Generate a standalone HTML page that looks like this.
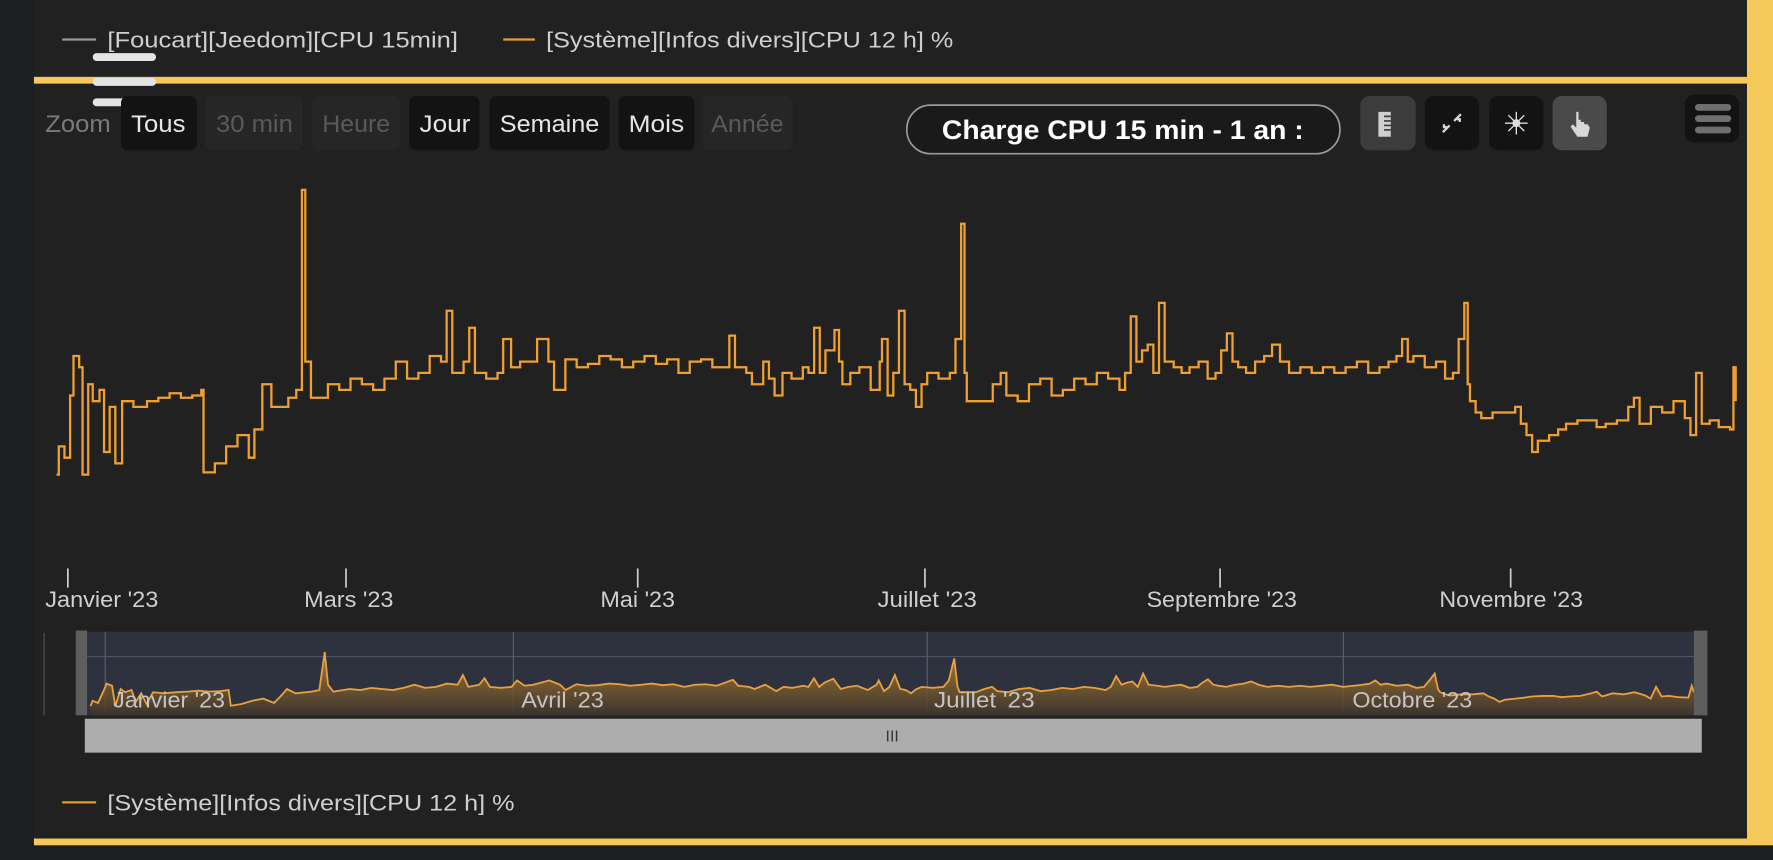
<!DOCTYPE html>
<html><head><meta charset="utf-8"><style>
html,body{margin:0;padding:0;background:#1c1e21;width:1773px;height:860px;overflow:hidden}
svg{display:block}
text{font-family:"Liberation Sans",sans-serif}
</style></head><body>
<svg width="1773" height="860" viewBox="0 0 1568 761" preserveAspectRatio="none" xmlns="http://www.w3.org/2000/svg">
<defs>
<linearGradient id="g" x1="0" y1="0" x2="0" y2="1">
<stop offset="0" stop-color="#c88a30" stop-opacity="0.75"/>
<stop offset="1" stop-color="#3a342c" stop-opacity="0.9"/>
</linearGradient>
</defs>
<rect x="0" y="0" width="1568" height="761" fill="#1c1e21"/>
<rect x="30" y="0" width="1515" height="748" fill="#212121"/>
<rect x="1545" y="0" width="23" height="748" fill="#f5c85a"/>
<rect x="30" y="68" width="1515" height="6" fill="#f5c85a"/>
<rect x="30" y="742" width="1515" height="6" fill="#f5c85a"/>

<!-- top legend -->
<line x1="55" y1="35" x2="85" y2="35" stroke="#9a9a9a" stroke-width="2"/>
<text x="95" y="42" font-size="20" fill="#cfcfcf" textLength="310" lengthAdjust="spacingAndGlyphs">[Foucart][Jeedom][CPU 15min]</text>
<line x1="445" y1="35" x2="473" y2="35" stroke="#e89a30" stroke-width="2"/>
<text x="483" y="42" font-size="20" fill="#cfcfcf" textLength="360" lengthAdjust="spacingAndGlyphs">[Système][Infos divers][CPU 12 h] %</text>

<!-- hamburger -->
<rect x="82" y="47" width="56" height="7" rx="3.5" fill="#e4e4e4"/>
<rect x="82" y="69" width="56" height="7" rx="3.5" fill="#e4e4e4"/>
<rect x="82" y="87" width="56" height="7" rx="3.5" fill="#e4e4e4"/>

<!-- zoom buttons -->
<text x="40" y="117" font-size="21" fill="#7a7a7a" textLength="58" lengthAdjust="spacingAndGlyphs">Zoom</text>
<rect x="107" y="85" width="67" height="48" rx="6" fill="#131313"/>
<text x="116" y="117" font-size="21" fill="#e6e6e6" textLength="48" lengthAdjust="spacingAndGlyphs">Tous</text>
<rect x="182" y="85" width="86" height="48" rx="6" fill="#262626"/>
<text x="191" y="117" font-size="21" fill="#5a5a5a" textLength="68" lengthAdjust="spacingAndGlyphs">30 min</text>
<rect x="276" y="85" width="78" height="48" rx="6" fill="#262626"/>
<text x="285" y="117" font-size="21" fill="#5a5a5a" textLength="60" lengthAdjust="spacingAndGlyphs">Heure</text>
<rect x="362" y="85" width="62" height="48" rx="6" fill="#131313"/>
<text x="371" y="117" font-size="21" fill="#e6e6e6" textLength="45" lengthAdjust="spacingAndGlyphs">Jour</text>
<rect x="433" y="85" width="106" height="48" rx="6" fill="#131313"/>
<text x="442" y="117" font-size="21" fill="#e6e6e6" textLength="88" lengthAdjust="spacingAndGlyphs">Semaine</text>
<rect x="547" y="85" width="67" height="48" rx="6" fill="#131313"/>
<text x="556" y="117" font-size="21" fill="#e6e6e6" textLength="49" lengthAdjust="spacingAndGlyphs">Mois</text>
<rect x="621" y="85" width="80" height="48" rx="6" fill="#262626"/>
<text x="629" y="117" font-size="21" fill="#5a5a5a" textLength="64" lengthAdjust="spacingAndGlyphs">Année</text>

<!-- title pill -->
<rect x="802" y="93" width="383" height="43" rx="21" fill="#1a1a1a" stroke="#9a9a9a" stroke-width="1.5"/>
<text x="833" y="123" font-size="24" font-weight="bold" fill="#ffffff" textLength="320" lengthAdjust="spacingAndGlyphs">Charge CPU 15 min - 1 an :</text>

<!-- icon buttons -->
<rect x="1203" y="85" width="49" height="48" rx="8" fill="#3c3c3c"/>
<rect x="1219" y="99" width="11" height="22" fill="#cfcfcf"/>
<path d="M1224 103h6M1224 107h6M1224 111h6M1224 115h6" stroke="#3c3c3c" stroke-width="1.5"/>
<rect x="1260" y="85" width="48" height="48" rx="8" fill="#131313"/>
<path d="M1276 117l6-6M1277 110v2.5h2.5M1292 101l-6 6M1291 108v-2.5h-2.5" stroke="#d8d8d8" stroke-width="2" fill="none"/>
<rect x="1317" y="85" width="48" height="48" rx="8" fill="#131313"/>
<circle cx="1341" cy="109" r="3.5" fill="#dcdcdc"/>
<g stroke="#dcdcdc" stroke-width="1.2"><path d="M1341 99v20M1331 109h20M1334 102l14 14M1348 102l-14 14"/></g>
<rect x="1373" y="85" width="48" height="48" rx="8" fill="#4a4a4a"/>
<path d="M1394 99v14l-3-3-2 2 6 9h9l2-8-2-3h-3v-2h-3v-2h-2v-7z" fill="#d8d8d8"/>
<rect x="1490" y="84" width="48" height="42" rx="8" fill="#131313"/>
<rect x="1499" y="92" width="32" height="6" rx="3" fill="#6f6f6f"/>
<rect x="1499" y="102" width="32" height="6" rx="3" fill="#6f6f6f"/>
<rect x="1499" y="112" width="32" height="6" rx="3" fill="#6f6f6f"/>

<!-- main chart -->
<path id="main" fill="none" stroke="#f0a030" stroke-width="2"/>

<!-- x axis ticks -->
<g stroke="#cfcfcf" stroke-width="1.5">
<line x1="60" y1="503" x2="60" y2="520"/><line x1="306" y1="503" x2="306" y2="520"/>
<line x1="564" y1="503" x2="564" y2="520"/><line x1="818" y1="503" x2="818" y2="520"/>
<line x1="1079" y1="503" x2="1079" y2="520"/><line x1="1336" y1="503" x2="1336" y2="520"/>
</g>
<g font-size="20" fill="#cfcfcf">
<text x="40" y="537" textLength="100" lengthAdjust="spacingAndGlyphs">Janvier '23</text>
<text x="269" y="537" textLength="79" lengthAdjust="spacingAndGlyphs">Mars '23</text>
<text x="531" y="537" textLength="66" lengthAdjust="spacingAndGlyphs">Mai '23</text>
<text x="776" y="537" textLength="88" lengthAdjust="spacingAndGlyphs">Juillet '23</text>
<text x="1014" y="537" textLength="133" lengthAdjust="spacingAndGlyphs">Septembre '23</text>
<text x="1273" y="537" textLength="127" lengthAdjust="spacingAndGlyphs">Novembre '23</text>
</g>

<!-- navigator -->
<line x1="39" y1="560" x2="39" y2="633" stroke="#555" stroke-width="1"/>
<rect x="76" y="559" width="1428" height="74" fill="#2e323e"/>
<line x1="76" y1="581" x2="1500" y2="581" stroke="#4d5362" stroke-width="1"/>
<g stroke="#5a6070" stroke-width="1"><line x1="93" y1="559" x2="93" y2="633"/><line x1="454" y1="559" x2="454" y2="633"/><line x1="820" y1="559" x2="820" y2="633"/><line x1="1188" y1="559" x2="1188" y2="633"/></g>
<path id="navfill" fill="url(#g)"/>
<path id="navline" fill="none" stroke="#e8a040" stroke-width="1.6"/>
<g font-size="20" fill="#c4c4c4">
<text x="100" y="626" textLength="99" lengthAdjust="spacingAndGlyphs">Janvier '23</text>
<text x="461" y="626" textLength="73" lengthAdjust="spacingAndGlyphs">Avril '23</text>
<text x="826" y="626" textLength="89" lengthAdjust="spacingAndGlyphs">Juillet '23</text>
<text x="1196" y="626" textLength="106" lengthAdjust="spacingAndGlyphs">Octobre '23</text></g>
<rect x="67" y="558" width="10" height="75" fill="#5e5e5e"/>
<rect x="1498" y="558" width="12" height="75" fill="#5e5e5e"/>
<rect x="75" y="636" width="1430" height="30" fill="#adadad"/>
<text x="789" y="656" font-size="14" fill="#333" text-anchor="middle">III</text>

<!-- bottom legend -->
<line x1="55" y1="710" x2="85" y2="710" stroke="#e89a30" stroke-width="2"/>
<text x="95" y="717" font-size="20" fill="#cfcfcf" textLength="360" lengthAdjust="spacingAndGlyphs">[Système][Infos divers][CPU 12 h] %</text>
</svg>
<script>
var p=[[50,420],[52,395],[57,405],[62,350],[65,315],[70,325],[73,420],[78,340],[82,355],[88,345],[92,400],[97,360],[102,410],[108,355],[118,360],[130,355],[140,352],[150,348],[160,352],[170,350],[178,345],[180,418],[190,410],[200,395],[210,385],[220,405],[225,380],[232,340],[240,360],[255,352],[262,345],[267,168],[270,320],[275,352],[290,340],[300,345],[310,335],[320,340],[330,345],[340,335],[350,320],[360,335],[370,330],[380,315],[390,320],[395,275],[400,330],[410,320],[415,290],[420,330],[430,335],[440,330],[445,300],[452,325],[460,320],[475,300],[485,320],[490,345],[500,318],[510,325],[520,322],[530,315],[540,318],[550,325],[560,320],[570,315],[580,322],[590,318],[600,330],[610,320],[620,318],[630,325],[645,297],[650,325],[660,330],[665,340],[675,320],[680,335],[685,350],[692,330],[700,335],[710,325],[715,330],[720,290],[725,330],[730,310],[738,292],[742,320],[745,340],[752,330],[760,325],[770,345],[778,320],[780,300],[785,350],[790,330],[795,275],[800,340],[805,345],[810,360],[815,340],[820,330],[830,335],[840,330],[845,300],[850,198],[853,330],[855,355],[870,355],[878,340],[885,330],[890,350],[900,355],[910,340],[920,335],[930,350],[940,345],[950,335],[960,340],[970,330],[980,335],[990,345],[995,330],[1000,280],[1005,320],[1010,310],[1015,305],[1020,330],[1025,268],[1030,320],[1038,325],[1045,330],[1052,325],[1060,320],[1068,335],[1075,330],[1080,310],[1085,295],[1090,320],[1095,325],[1102,330],[1110,320],[1118,315],[1125,305],[1132,320],[1140,330],[1150,325],[1160,330],[1170,325],[1180,330],[1190,325],[1200,320],[1210,330],[1220,325],[1228,320],[1235,315],[1240,300],[1245,320],[1250,315],[1260,325],[1270,320],[1278,335],[1285,330],[1290,300],[1295,268],[1298,340],[1300,355],[1305,365],[1310,370],[1320,365],[1330,365],[1340,360],[1345,375],[1350,385],[1355,400],[1360,390],[1370,385],[1378,380],[1385,375],[1395,372],[1405,372],[1412,378],[1420,375],[1430,372],[1440,360],[1445,352],[1450,375],[1460,360],[1470,365],[1480,355],[1490,370],[1495,385],[1500,330],[1505,375],[1512,372],[1520,378],[1530,380],[1533,325],[1535,355]];
var d="M"+p[0][0]+" "+p[0][1];
for(var i=1;i<p.length;i++){d+="H"+p[i][0]+"V"+p[i][1];}
document.getElementById("main").setAttribute("d",d);
function nx(x){return 80+(x-50)*(1418/1485);}function ny(y){return 577+(y-168)*0.19;}
var n="M"+nx(p[0][0]).toFixed(1)+" "+ny(p[0][1]).toFixed(1);
for(var i=1;i<p.length;i++){n+="L"+nx(p[i][0]).toFixed(1)+" "+ny(p[i][1]).toFixed(1);}
document.getElementById("navline").setAttribute("d",n);
document.getElementById("navfill").setAttribute("d",n+"L"+nx(1535).toFixed(1)+" 633L80 633Z");
</script>
</body></html>
